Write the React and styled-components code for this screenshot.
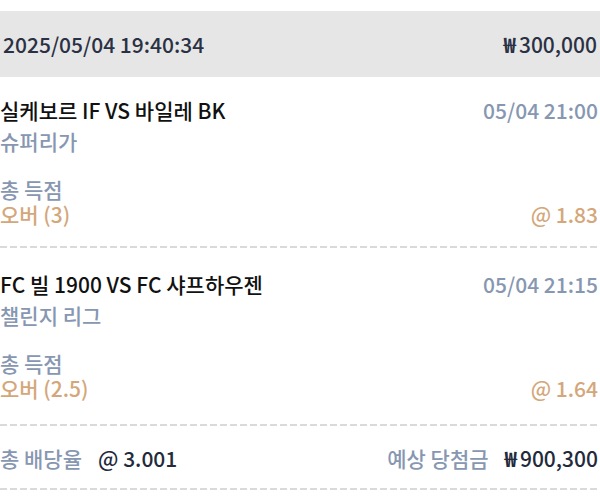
import React from "react";
import styled, { createGlobalStyle } from "styled-components";

const Global = createGlobalStyle`
  html, body { margin: 0; padding: 0; background: #ffffff; }
  body { font-family: "Noto Sans CJK KR", "Noto Sans", sans-serif; }
`;

const Page = styled.div`
  padding-top: 11px;
  width: 600px;
`;

const Header = styled.div`
  height: 66px;
  background: #e6e6e6;
  display: flex;
  align-items: center;
  justify-content: space-between;
  padding: 0 3px;
  font-size: 21px;
  font-weight: 500;
  color: #2a3144;
`;

const Won = styled.span`
  font-weight: 700;
  margin-right: 3px;
`;

const Item = styled.div`
  padding: ${(p) => (p.$first ? "18px" : "21px")} 2px
    ${(p) => (p.$last ? "23px" : "19px")} 0;
`;

const Row = styled.div`
  display: flex;
  justify-content: space-between;
  align-items: center;
  line-height: ${(p) => p.$lh || 31}px;
  margin-top: ${(p) => p.$mt || 0}px;
`;

const Title = styled.span`
  font-size: 21px;
  font-weight: 500;
  color: #111111;
`;

const Sub = styled.span`
  font-size: 21px;
  font-weight: 500;
  color: #8797b1;
`;

const Pick = styled.span`
  font-size: 21px;
  font-weight: 500;
  color: #d4a77b;
`;

const Dash = styled.div`
  height: 2px;
  background: repeating-linear-gradient(
    to right,
    #dadada 0 7px,
    transparent 7px 10px
  );
`;

const Summary = styled.div`
  display: flex;
  justify-content: space-between;
  align-items: center;
  line-height: 30px;
  padding: 17px 2px 15px 0;
`;

const Group = styled.div`
  display: flex;
  align-items: center;
  gap: 16px;
`;

const Strong = styled.span`
  font-size: 21px;
  font-weight: 500;
  color: #222a3b;
`;

const bets = [
  {
    match: "실케보르 IF VS 바일레 BK",
    time: "05/04 21:00",
    league: "슈퍼리가",
    market: "총 득점",
    pick: "오버 (3)",
    odds: "@ 1.83",
  },
  {
    match: "FC 빌 1900 VS FC 샤프하우젠",
    time: "05/04 21:15",
    league: "챌린지 리그",
    market: "총 득점",
    pick: "오버 (2.5)",
    odds: "@ 1.64",
  },
];

export default function App() {
  return (
    <>
      <Global />
      <Page>
        <Header>
          <span>2025/05/04 19:40:34</span>
          <span>
            <Won>₩</Won>300,000
          </span>
        </Header>
        {bets.map((b, i) => (
          <React.Fragment key={i}>
            <Item $first={i === 0} $last={i === bets.length - 1}>
              <Row>
                <Title>{b.match}</Title>
                <Sub>{b.time}</Sub>
              </Row>
              <Row>
                <Sub>{b.league}</Sub>
              </Row>
              <Row $lh={25} $mt={20}>
                <Sub>{b.market}</Sub>
              </Row>
              <Row $lh={25}>
                <Pick>{b.pick}</Pick>
                <Pick>{b.odds}</Pick>
              </Row>
            </Item>
            <Dash />
          </React.Fragment>
        ))}
        <Summary>
          <Group>
            <Sub>총 배당율</Sub>
            <Strong>@ 3.001</Strong>
          </Group>
          <Group>
            <Sub>예상 당첨금</Sub>
            <Strong>
              <Won>₩</Won>900,300
            </Strong>
          </Group>
        </Summary>
        <Dash />
      </Page>
    </>
  );
}
